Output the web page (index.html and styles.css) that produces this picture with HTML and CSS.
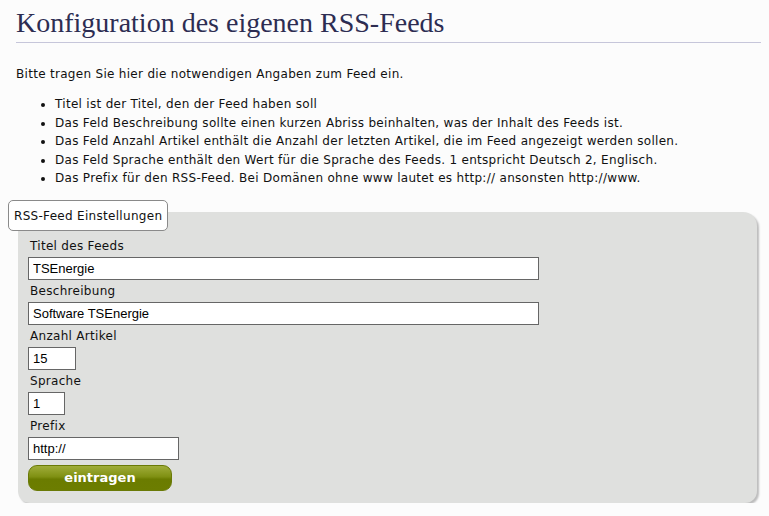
FILE: index.html
```html
<!DOCTYPE html>
<html lang="de">
<head>
<meta charset="utf-8">
<title>Konfiguration des eigenen RSS-Feeds</title>
<link rel="stylesheet" href="styles.css">
</head>
<body>
<h1 class="title">Konfiguration des eigenen RSS-Feeds</h1>
<p class="intro">Bitte tragen Sie hier die notwendigen Angaben zum Feed ein.</p>
<ul class="hints">
  <li>Titel ist der Titel, den der Feed haben soll</li>
  <li>Das Feld Beschreibung sollte einen kurzen Abriss beinhalten, was der Inhalt des Feeds ist.</li>
  <li>Das Feld Anzahl Artikel enthält die Anzahl der letzten Artikel, die im Feed angezeigt werden sollen.</li>
  <li>Das Feld Sprache enthält den Wert für die Sprache des Feeds. 1 entspricht Deutsch 2, Englisch.</li>
  <li>Das Prefix für den RSS-Feed. Bei Domänen ohne www lautet es http:// ansonsten http://www.</li>
</ul>
<form class="settings">
  <div class="legend">RSS-Feed Einstellungen</div>
  <div class="panel">
    <label class="lbl">Titel des Feeds</label>
    <input class="field w-title" type="text" value="TSEnergie">
    <label class="lbl">Beschreibung</label>
    <input class="field w-title" type="text" value="Software TSEnergie">
    <label class="lbl">Anzahl Artikel</label>
    <input class="field w-count" type="text" value="15">
    <label class="lbl">Sprache</label>
    <input class="field w-lang" type="text" value="1">
    <label class="lbl">Prefix</label>
    <input class="field w-prefix" type="text" value="http://">
    <button class="submit" type="button">eintragen</button>
  </div>
</form>
</body>
</html>
```
FILE: styles.css
```css
html, body {
  background: #fcfcfc;
}
body {
  margin: 8px;
  font-family: "DejaVu Sans", Verdana, sans-serif;
  font-size: 12px;
  letter-spacing: 0.3px;
  color: #111;
}
.title {
  margin: 0 0 0 8px;
  padding: 0 0 4px 0;
  font-family: "Liberation Serif", "Times New Roman", serif;
  font-weight: normal;
  font-size: 28px;
  letter-spacing: 0;
  line-height: 30px;
  color: #2d2d52;
  border-bottom: 1px solid #c6c6da;
}
.intro {
  margin: 22px 0 0 8px;
  line-height: 18px;
}
.hints {
  margin: 12px 0 0 0;
  padding-left: 47px;
  line-height: 18.5px;
}
.settings {
  margin-top: 12px;
  display: flex;
  flex-direction: column;
  align-items: flex-start;
}
.legend {
  position: relative;
  z-index: 1;
  background: #fff;
  border: 1px solid #8a8a8a;
  border-radius: 5px;
  padding: 0 5px;
  height: 29px;
  line-height: 30px;
  font-size: 12px;
}
.panel {
  align-self: stretch;
  margin: -19px 4px 0 10px;
  padding: 23px 10px 12px 10px;
  background: #dfe0de;
  border-radius: 0 14px 12px 12px;
  box-shadow: 2px 2px 2px rgba(0,0,0,0.25);
  display: flex;
  flex-direction: column;
  align-items: flex-start;
}
.lbl {
  display: block;
  height: 22px;
  line-height: 22px;
  padding-left: 2px;
  font-size: 12px;
}
.field {
  box-sizing: border-box;
  height: 23px;
  margin: 0;
  border: 1px solid #666;
  border-radius: 0;
  background: #fff;
  padding: 0 4px;
  font-family: "Liberation Sans", Arial, sans-serif;
  font-size: 13px;
  letter-spacing: 0;
  color: #000;
  outline: none;
}
.w-title { width: 511px; }
.w-count { width: 48px; }
.w-lang { width: 37px; }
.w-prefix { width: 151px; }
.submit {
  margin-top: 5px;
  width: 144px;
  height: 26px;
  border: 1px solid #6a7a06;
  border-radius: 9px;
  background: linear-gradient(#a0ad3a 0%, #7f9012 45%, #6b7c00 55%, #6c7d00 100%);
  color: #fff;
  font-family: "DejaVu Sans", Verdana, sans-serif;
  font-weight: bold;
  font-size: 13px;
  letter-spacing: 0;
  padding: 0;
}
```
